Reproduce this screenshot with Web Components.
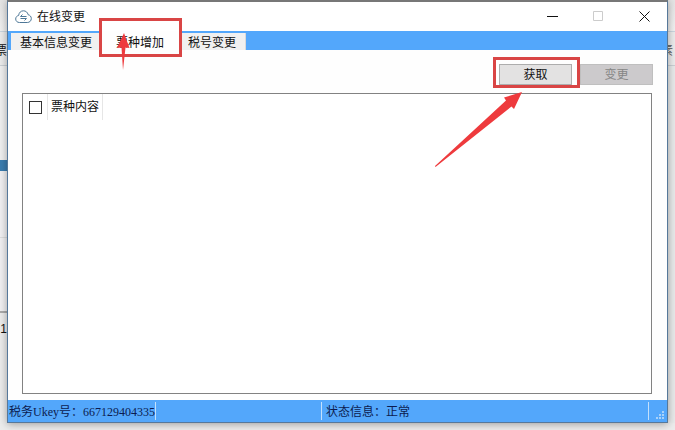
<!DOCTYPE html>
<html lang="zh-CN">
<head>
<meta charset="utf-8">
<title>在线变更</title>
<style>
  html, body {
    height: 100%;
    margin: 0;
  }

  body {
    font: 12px/16px "Liberation Sans", "Noto Sans CJK SC", sans-serif;
    color: #111;
    background: #ececec;
    overflow: hidden;
  }
</style>
</head>
<body>
<desk-top>
  <back-strip slot="left" side="left"></back-strip>
  <app-window heading="在线变更">
    <tab-strip slot="tabs">
      <tab-item>基本信息变更</tab-item>
      <tab-item selected><red-mark kind="tab">票种增加</red-mark></tab-item>
      <tab-item>税号变更</tab-item>
    </tab-strip>
    <tool-row>
      <red-mark kind="button"><push-button>获取</push-button></red-mark>
      <push-button disabled>变更</push-button>
    </tool-row>
    <check-list column="票种内容"></check-list>
    <status-bar slot="status">
      <span slot="key">税务Ukey号：667129404335</span>
      <span slot="state">状态信息：正常</span>
    </status-bar>
  </app-window>
  <back-strip slot="right" side="right"></back-strip>
</desk-top>

<script>
class BaseElement extends HTMLElement {
  constructor() {
    super();
    this.attachShadow({ mode: 'open' });
  }

  connectedCallback() {
    this.shadowRoot.innerHTML = `
      <style>
        * { box-sizing: border-box; }
        ${this.getStyles()}
      </style>
      ${this.getTemplate()}
    `;
  }
}

class DeskTop extends BaseElement {
  getStyles() {
    return `
      :host {
        display: grid;
        grid-template-columns: 7px minmax(0, 1fr) 7px;
        height: 100%;
        padding-bottom: 7px;
        box-sizing: border-box;
      }
    `;
  }

  getTemplate() {
    return `
      <slot name="left"></slot>
      <slot></slot>
      <slot name="right"></slot>
    `;
  }
}

// What shows of the program behind the window
class BackStrip extends BaseElement {
  getStyles() {
    return `
      :host {
        display: flex;
        flex-direction: column;
        overflow: hidden;
        background: #ececec;
      }
      .top { height: 31px; background: linear-gradient(#e4e4e4, #f1f1f1); }
      .menu {
        display: flex;
        justify-content: flex-end;
        align-items: center;
        height: 35px;
        padding-top: 4px;
        border-top: 1px solid #cbd6df;
        border-bottom: 1px solid #cbd0d4;
      }
      :host([side="right"]) .menu { padding-right: 2px; color: #555; }
      .pane { height: 94px; background: #f0f0f0; }
      .accent { height: 11px; background: #3b7db0; }
      .list { height: 66px; background: #f1f0f2; }
      .foot { height: 76px; background: #f1f0f2; border-top: 1px solid #ddd; border-bottom: 2px solid #aaa; }
      .page { display: flex; justify-content: flex-end; padding-top: 8px; }
      .rest { flex: 1; background: #e8eaea; }
    `;
  }

  getTemplate() {
    if (this.getAttribute('side') === 'right') {
      return `
        <div class="top"></div>
        <div class="menu">素</div>
        <div class="rest"></div>
      `;
    }
    return `
      <div class="top"></div>
      <div class="menu">票</div>
      <div class="pane"></div>
      <div class="accent"></div>
      <div class="list"></div>
      <div class="foot"></div>
      <div class="page">1</div>
    `;
  }
}

class AppWindow extends BaseElement {
  getStyles() {
    return `
      :host {
        display: flex;
        flex-direction: column;
        position: relative;
        border: 1px solid #56789a;
        border-top: 2px solid #777;
        background: #fefefe;
        box-shadow: 0 1px 8px rgba(0, 0, 0, 0.35);
      }
      header {
        display: flex;
        align-items: center;
        height: 29px;
        padding-left: 7px;
        background: #fff;
      }
      h1 {
        flex: 1;
        margin: 0 0 0 5px;
        font-size: 12px;
        font-weight: 400;
      }
      button {
        display: flex;
        align-items: center;
        justify-content: center;
        width: 46px;
        height: 28px;
        padding: 0;
        border: 0;
        background: none;
        color: #111;
      }
      button:disabled { color: #ccc; }
      main {
        display: flex;
        flex: 1;
        flex-direction: column;
        gap: 8px;
        padding: 14px 15px 6px 14px;
      }
    `;
  }

  getTemplate() {
    return `
      <header>
        <svg width="17" height="14" viewBox="0 0 17 14" fill="none" stroke="#4d7797" stroke-width="1" aria-hidden="true">
          <path d="M4.500 12.500C2.200 12.500 .7 11 .7 9S2 5.800 3.600 5.500C4 2.600 5.800.8 8.400.8c2.400 0 4.200 1.500 4.700 3.900C15 5.100 16.300 6.600 16.300 8.500c0 2.300-1.600 4-4 4z"/>
          <path d="M11.500 6.500h-6l2-2M5.500 8.500h6l-2 2"/>
        </svg>
        <h1>${this.getAttribute('heading')}</h1>
        <button type="button" aria-label="最小化">
          <svg width="11" height="11" stroke="currentColor"><path d="M0 5.500h11"/></svg>
        </button>
        <button type="button" aria-label="最大化" disabled>
          <svg width="11" height="11" fill="none" stroke="currentColor"><path d="M.5.5h9v9h-9z"/></svg>
        </button>
        <button type="button" aria-label="关闭">
          <svg width="11" height="11" stroke="currentColor"><path d="M.5.5l10 10M10.500.5l-10 10"/></svg>
        </button>
      </header>
      <slot name="tabs"></slot>
      <main><slot></slot></main>
      <slot name="status"></slot>
    `;
  }
}

class TabStrip extends BaseElement {
  getStyles() {
    return `
      :host {
        display: flex;
        align-items: flex-end;
        height: 19px;
        padding-left: 3px;
        background: #53a7fb;
      }
    `;
  }

  getTemplate() {
    return `<slot></slot>`;
  }

  connectedCallback() {
    super.connectedCallback();
    this.setAttribute('role', 'tablist');
  }
}

class TabItem extends BaseElement {
  getStyles() {
    return `
      :host { display: block; }
      button {
        display: block;
        height: 17px;
        padding: 1px 9px 0;
        border: 0;
        border-right: 1px solid #d9d9d9;
        background: #f0f0f0;
        color: #111;
        font: inherit;
        line-height: 18px;
      }
      :host([selected]) button {
        height: 19px;
        padding: 3px 15px 0 14px;
        border: 0;
        background: #fefefe;
      }
    `;
  }

  getTemplate() {
    return `<button type="button" role="tab" aria-selected="${this.hasAttribute('selected')}"><slot></slot></button>`;
  }
}

// Red frame and arrow drawn over the slotted control
class RedMark extends BaseElement {
  getStyles() {
    return `
      :host { display: block; position: relative; }
      .frame {
        position: absolute;
        z-index: 2;
        border: 3px solid #d94545;
        pointer-events: none;
      }
      svg {
        position: absolute;
        z-index: 3;
        overflow: visible;
        fill: #ee3a3d;
        pointer-events: none;
      }
      :host([kind="tab"]) .frame { inset: -16px -18px -5px -17px; }
      :host([kind="tab"]) svg { left: 1px; top: -1px; }
      :host([kind="button"]) .frame { inset: -7px -8px -3px -6px; }
      :host([kind="button"]) svg { right: 50px; top: 28px; }
    `;
  }

  getTemplate() {
    const arrow = this.getAttribute('kind') === 'tab'
      ? `<svg width="13" height="37" viewBox="0 0 13 37"><path d="M7 0L12.500 15L8.500 14.500L6 37L4.500 14.500L0 15z"/></svg>`
      : `<svg width="87" height="75" viewBox="0 0 87 75"><path d="M87 0L79 17L76.500 14.500L.5 75L0 74L71 8.500L69 5.500z"/></svg>`;
    return `<slot></slot><div class="frame"></div>${arrow}`;
  }
}

class ToolRow extends BaseElement {
  getStyles() {
    return `
      :host {
        display: flex;
        justify-content: flex-end;
        gap: 8px;
        margin-right: -1px;
      }
    `;
  }

  getTemplate() {
    return `<slot></slot>`;
  }
}

class PushButton extends BaseElement {
  getStyles() {
    return `
      :host { display: block; }
      button {
        display: block;
        width: 73px;
        height: 21px;
        padding: 1px 0 0;
        border: 1px solid #adadad;
        background: #e3e2e2;
        color: #111;
        font: inherit;
      }
      button:disabled {
        border-color: #bfbfbf;
        background: #cccacc;
        color: #868686;
      }
    `;
  }

  getTemplate() {
    return `<button type="button" ${this.hasAttribute('disabled') ? 'disabled' : ''}><slot></slot></button>`;
  }
}

class CheckList extends BaseElement {
  getStyles() {
    return `
      :host {
        display: block;
        flex: 1;
        border: 1px solid #828282;
        background: #fff;
      }
      table { border-collapse: collapse; }
      th {
        height: 26px;
        padding: 0 3px;
        border-right: 1px solid #e6e6e6;
        font-weight: 400;
        text-align: left;
      }
      th:first-child { padding: 0 5px 0 6px; }
      input {
        display: block;
        appearance: none;
        width: 13px;
        height: 13px;
        margin: 0;
        border: 1px solid #333;
        background: #fff;
      }
    `;
  }

  getTemplate() {
    return `
      <table>
        <thead>
          <tr>
            <th><input type="checkbox" id="all" aria-label="全选"></th>
            <th><label for="all">${this.getAttribute('column')}</label></th>
          </tr>
        </thead>
      </table>
    `;
  }
}

class StatusBar extends BaseElement {
  getStyles() {
    return `
      :host {
        display: grid;
        grid-template-columns: 148px 166px 1fr 18px;
        height: 22px;
        padding: 2px 0;
        box-sizing: border-box;
        background: #53a7fb;
        color: #0c1c50;
        font-family: "Liberation Serif", "Noto Sans CJK SC", serif;
        line-height: 20px;
        white-space: nowrap;
      }
      div { height: 18px; border-right: 1px solid #c4e0fb; padding-left: 1px; }
      .state { padding-left: 4px; }
      svg { align-self: end; justify-self: end; margin-right: 2px; fill: #a8d2fa; }
    `;
  }

  getTemplate() {
    return `
      <div><slot name="key"></slot></div>
      <div></div>
      <div class="state"><slot name="state"></slot></div>
      <svg width="9" height="9" aria-hidden="true">
        <path d="M6 0h2v2h-2zM3 3h2v2h-2zM6 3h2v2h-2zM0 6h2v2h-2zM3 6h2v2h-2zM6 6h2v2h-2z"/>
      </svg>
    `;
  }
}

customElements.define('desk-top', DeskTop);
customElements.define('back-strip', BackStrip);
customElements.define('app-window', AppWindow);
customElements.define('tab-strip', TabStrip);
customElements.define('tab-item', TabItem);
customElements.define('red-mark', RedMark);
customElements.define('tool-row', ToolRow);
customElements.define('push-button', PushButton);
customElements.define('check-list', CheckList);
customElements.define('status-bar', StatusBar);
</script>
</body>
</html>
